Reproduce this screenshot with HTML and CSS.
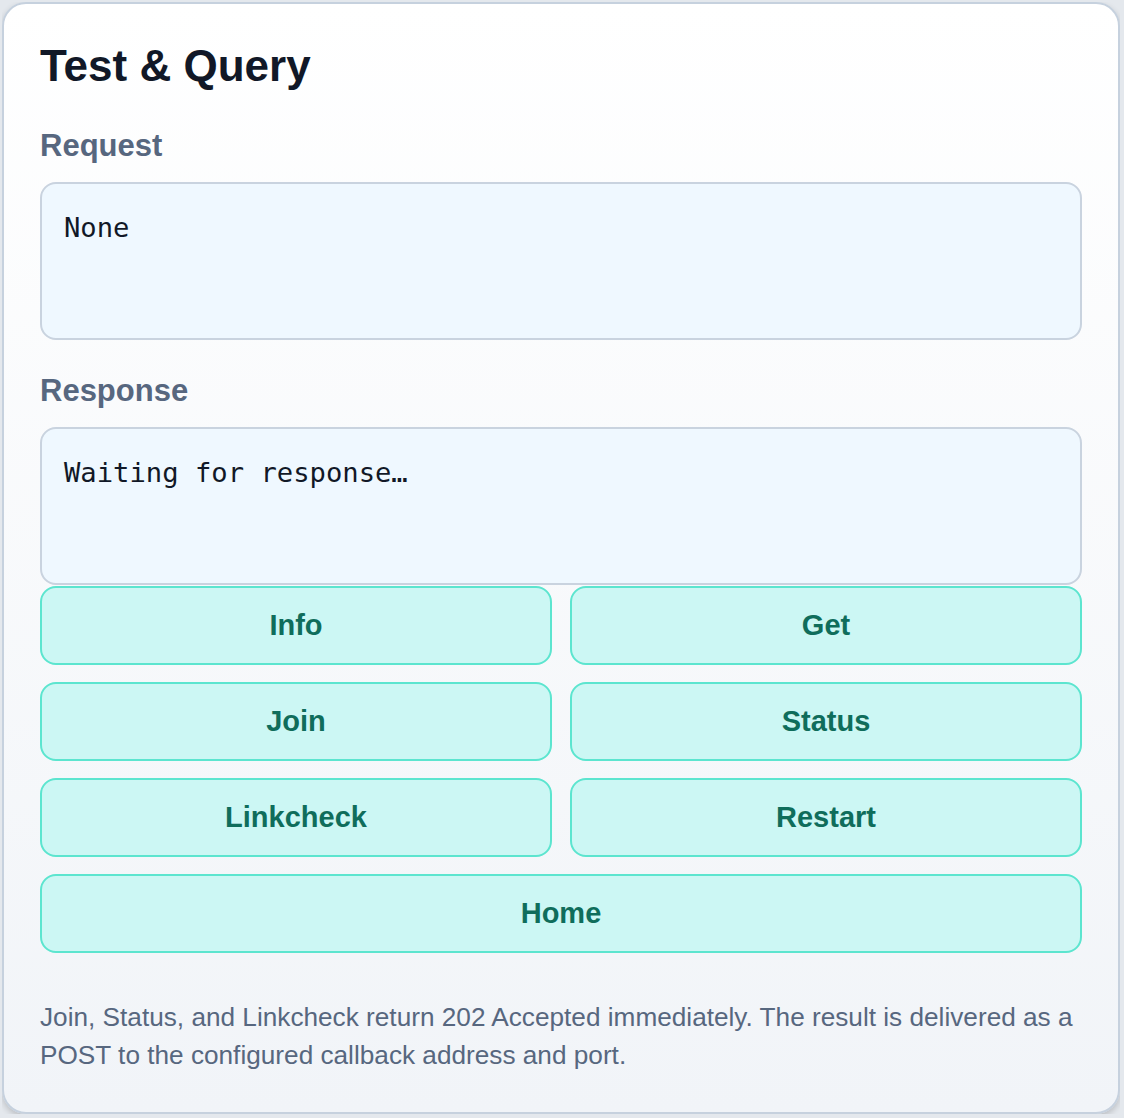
FILE: index.html
```html
<!DOCTYPE html>
<html lang="en">
<head>
    <meta charset="UTF-8">
    <meta name="viewport" content="width=device-width, initial-scale=1.0">
    <title>Test &amp; Query</title>
    <link rel="stylesheet" href="styles.css">
</head>
<body>
<section class="card">
    <h1 class="title">Test &amp; Query</h1>

    <h2 class="label">Request</h2>
    <pre class="output">None</pre>

    <h2 class="label label-response">Response</h2>
    <pre class="output output-response">Waiting for response…</pre>

    <div class="actions">
        <button class="action">Info</button>
        <button class="action">Get</button>
        <button class="action">Join</button>
        <button class="action">Status</button>
        <button class="action">Linkcheck</button>
        <button class="action">Restart</button>
        <button class="action action-wide">Home</button>
    </div>

    <p class="note">Join, Status, and Linkcheck return 202 Accepted immediately. The result is delivered as a POST to the configured callback address and port.</p>
</section>
</body>
</html>
```

FILE: styles.css
```css
html {
    background: #e4e8ed;
}

body {
    margin: 2px 4px 0 2px;
    font-family: "Liberation Sans", Arial, sans-serif;
}

.card {
    background: linear-gradient(#ffffff, #f1f4f8);
    border: 2px solid #c6d1de;
    border-radius: 24px;
    padding: 36px 36px 38px;
    box-shadow: 0 3px 6px rgba(0, 0, 0, 0.18);
}

.title {
    margin: 0;
    font-size: 44px;
    line-height: 52px;
    font-weight: bold;
    color: #111827;
}

.label {
    margin: 36px 0 18px;
    font-size: 31px;
    line-height: 36px;
    font-weight: bold;
    color: #57677f;
}

.label-response {
    margin-top: 33px;
}

.output {
    box-sizing: border-box;
    height: 158px;
    margin: 0;
    padding: 24px 22px;
    background: #eff8ff;
    border: 2px solid #c9d3df;
    border-radius: 16px;
    font-family: "DejaVu Sans Mono", monospace;
    font-size: 27.2px;
    line-height: 40px;
    color: #111827;
}

.output-response {
    margin-bottom: 1px;
}

.actions {
    display: grid;
    grid-template-columns: 1fr 1fr;
    gap: 17px 18px;
}

.action {
    height: 79px;
    background: #ccf7f4;
    border: 2px solid #5ce5cf;
    border-radius: 16px;
    font-family: "Liberation Sans", Arial, sans-serif;
    font-size: 29px;
    font-weight: bold;
    color: #0f6d5b;
    cursor: pointer;
}

.action-wide {
    grid-column: span 2;
}

.note {
    margin: 45px 0 0;
    font-size: 26.2px;
    line-height: 38px;
    color: #57677f;
}
```
